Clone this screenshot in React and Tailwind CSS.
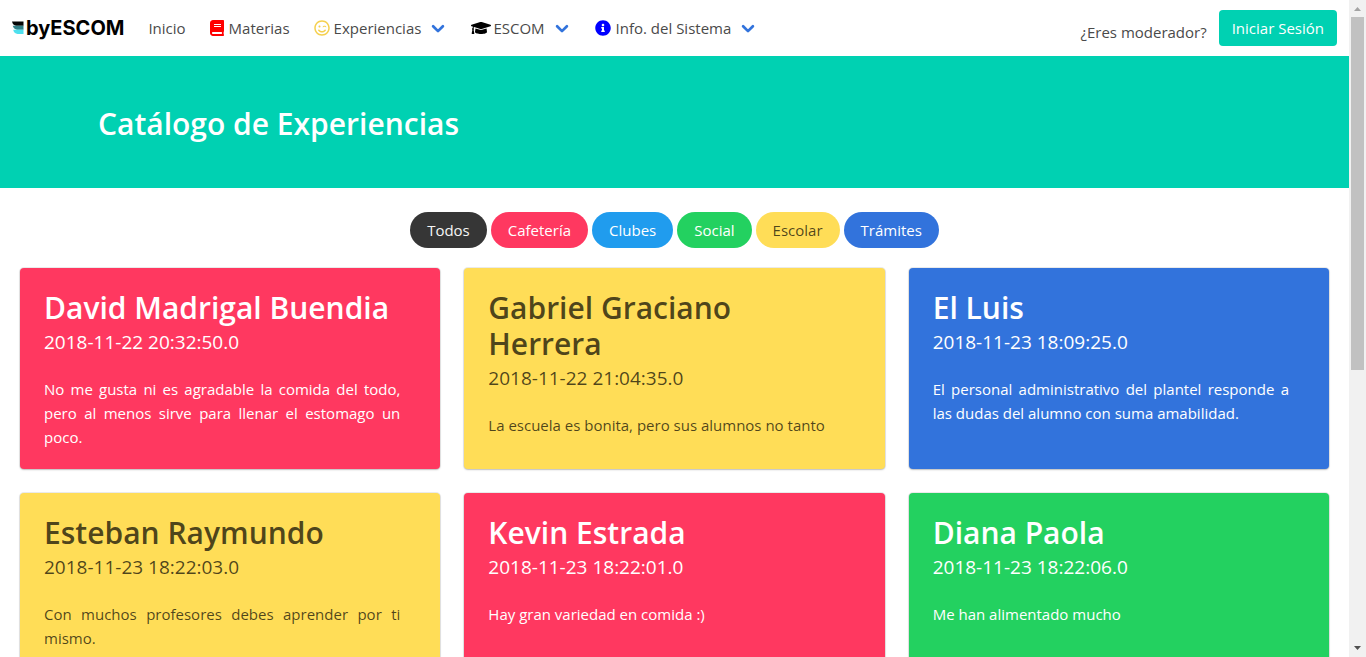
import { FaBook, FaGraduationCap, FaInfoCircle, FaRegSmileWink } from "react-icons/fa";

const filters = [
  { label: "Todos", tone: "bg-[#363636] text-[#f5f5f5]" },
  { label: "Cafetería", tone: "bg-[#ff3860] text-white" },
  { label: "Clubes", tone: "bg-[#209cee] text-white" },
  { label: "Social", tone: "bg-[#23d160] text-white" },
  { label: "Escolar", tone: "bg-[#ffdd57] text-black/70" },
  { label: "Trámites", tone: "bg-[#3273dc] text-white" },
];

const experiences = [
  {
    name: "David Madrigal Buendia",
    date: "2018-11-22 20:32:50.0",
    text: "No me gusta ni es agradable la comida del todo, pero al menos sirve para llenar el estomago un poco.",
    tone: "bg-[#ff3860] text-white",
  },
  {
    name: "Gabriel Graciano Herrera",
    date: "2018-11-22 21:04:35.0",
    text: "La escuela es bonita, pero sus alumnos no tanto",
    tone: "bg-[#ffdd57] text-black/70",
  },
  {
    name: "El Luis",
    date: "2018-11-23 18:09:25.0",
    text: "El personal administrativo del plantel responde a las dudas del alumno con suma amabilidad.",
    tone: "bg-[#3273dc] text-white",
  },
  {
    name: "Esteban Raymundo",
    date: "2018-11-23 18:22:03.0",
    text: "Con muchos profesores debes aprender por ti mismo.",
    tone: "bg-[#ffdd57] text-black/70",
  },
  {
    name: "Kevin Estrada",
    date: "2018-11-23 18:22:01.0",
    text: "Hay gran variedad en comida :)",
    tone: "bg-[#ff3860] text-white",
  },
  {
    name: "Diana Paola",
    date: "2018-11-23 18:22:06.0",
    text: "Me han alimentado mucho",
    tone: "bg-[#23d160] text-white",
  },
];

function Chevron() {
  return (
    <svg className="mr-0.5 ml-2.5 h-3.5 w-3.5 text-[#3273dc]" viewBox="0 0 14 14" fill="none" stroke="currentColor" strokeWidth="2.7" strokeLinecap="round" strokeLinejoin="round" aria-hidden="true">
      <path d="M2.100 5.200 7 10.100l4.900-4.900" />
    </svg>
  );
}

function Logo() {
  return (
    <a href="#inicio" className="flex items-center pr-3 pl-2.5 text-black">
      <svg className="h-4 w-4" viewBox="0 0 16 16" aria-hidden="true">
        <path d="M2 1.500h11.500v4.300H6C4 5.500 2.500 4 2 1.500z" fill="#050505" />
        <path d="M2.700 5.800h10.800v4H7C5 9.500 3.300 8 2.700 5.800z" fill="#2f8088" />
        <path d="M3.200 9.800h10.300V14H7.500c-2.200-.3-3.800-1.800-4.300-4.200z" fill="#4ee0ee" />
      </svg>
      <span className="font-[Inter] text-[20px] leading-6 font-bold">byESCOM</span>
    </a>
  );
}

function Navbar() {
  const link = "flex items-center";
  return (
    <nav className="flex h-14 items-stretch bg-white text-[15px] text-[#4a4a4a]">
      <Logo />
      <div className="flex flex-1 items-center gap-6 pl-3">
        <a href="#inicio" className={link}>Inicio</a>
        <a href="#materias" className={link}>
          <FaBook className="mr-[5px] h-4 w-3.5 text-[#ff0000]" />
          Materias
        </a>
        <a href="#experiencias" className={link}>
          <FaRegSmileWink className="mr-1 h-4 w-4 text-[#f5d04e]" />
          Experiencias
          <Chevron />
        </a>
        <a href="#escom" className={link}>
          <FaGraduationCap className="mr-0.5 h-5 w-5 text-black" />
          ESCOM
          <Chevron />
        </a>
        <a href="#info" className={link}>
          <FaInfoCircle className="mr-[5px] h-4 w-4 text-[#0000ff]" />
          Info. del Sistema
          <Chevron />
        </a>
      </div>
      <div className="flex items-center gap-3 pr-3">
        <span className="pt-2">¿Eres moderador?</span>
        <button type="button" className="h-9 rounded bg-[#00d1b2] px-[13px] text-white">Iniciar Sesión</button>
      </div>
    </nav>
  );
}

function ExperienceCard({ name, date, text, tone }) {
  return (
    <article className={`min-h-[201px] rounded pt-[22px] pr-10 pb-5 pl-6 shadow-[0_1px_2px_rgba(10,10,10,0.2),0_0_0_1px_rgba(10,10,10,0.08)] ${tone}`}>
      <h2 className="text-[30px] leading-9 font-semibold">{name}</h2>
      <p className="text-[19px] leading-8">{date}</p>
      <p className="mt-[19px] text-justify text-[15px] leading-6">{text}</p>
    </article>
  );
}

function Scrollbar() {
  return (
    <div className="flex w-[17px] shrink-0 flex-col items-center justify-between bg-[#f1f1f1]" aria-hidden="true">
      <div className="flex flex-col items-center">
        <svg className="h-[17px] w-[17px]" viewBox="0 0 17 17">
          <path d="M5 11h7L8.500 7z" fill="#a3a3a3" />
        </svg>
        <div className="h-[353px] w-[13px] bg-[#c1c1c1]" />
      </div>
      <svg className="h-[17px] w-[17px]" viewBox="0 0 17 17">
        <path d="M5 6h7l-3.500 4z" fill="#505050" />
      </svg>
    </div>
  );
}

export default function App() {
  return (
    <div className="flex h-screen overflow-hidden bg-white font-['Open_Sans',sans-serif]">
      <div className="min-w-0 flex-1 overflow-hidden">
        <Navbar />
        <header className="bg-[#00d1b2] px-[98px] pt-[50px] pb-[46px]">
          <h1 className="text-[30px] leading-9 font-semibold text-white">Catálogo de Experiencias</h1>
        </header>
        <main className="px-5 pt-6">
          <div className="flex justify-center gap-1">
            {filters.map((f) => (
              <button key={f.label} type="button" className={`h-9 rounded-full px-[17px] text-[15px] ${f.tone}`}>
                {f.label}
              </button>
            ))}
          </div>
          <section className="mt-5 grid grid-cols-3 gap-6">
            {experiences.map((e) => (
              <ExperienceCard key={e.name} {...e} />
            ))}
          </section>
        </main>
      </div>
      <Scrollbar />
    </div>
  );
}
